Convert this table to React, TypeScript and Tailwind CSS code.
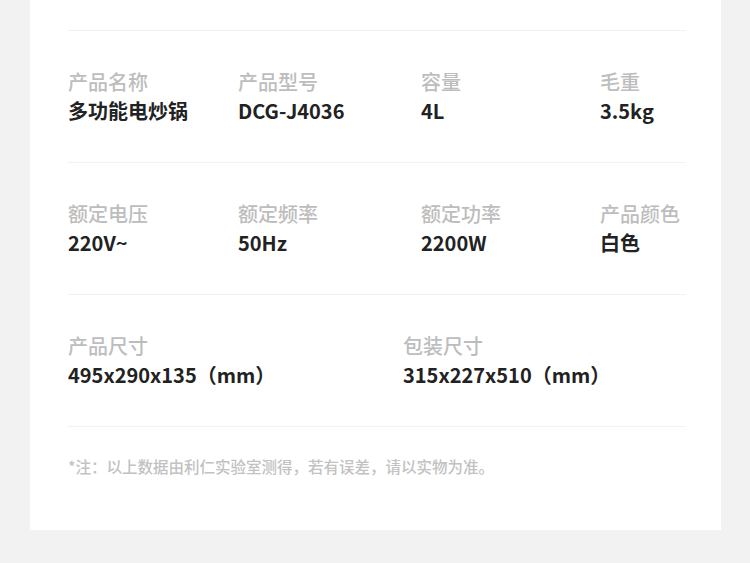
const rows = [
    [
        { label: '产品名称', value: '多功能电炒锅', w: 'w-[170px]' },
        { label: '产品型号', value: 'DCG-J4036', w: 'w-[183px]' },
        { label: '容量', value: '4L', w: 'w-[179px]' },
        { label: '毛重', value: '3.5kg', w: 'flex-1' },
    ],
    [
        { label: '额定电压', value: '220V~', w: 'w-[170px]' },
        { label: '额定频率', value: '50Hz', w: 'w-[183px]' },
        { label: '额定功率', value: '2200W', w: 'w-[179px]' },
        { label: '产品颜色', value: '白色', w: 'flex-1' },
    ],
    [
        { label: '产品尺寸', value: '495x290x135（mm）', w: 'w-[335px]' },
        { label: '包装尺寸', value: '315x227x510（mm）', w: 'flex-1' },
    ],
];

export default function App() {
    return (
        <div
            className="w-[750px] h-[563px] bg-[#f2f2f2] overflow-hidden"
            style={{ fontFamily: '"Noto Sans CJK SC", "Noto Sans", sans-serif' }}
        >
            <div className="ml-[30px] w-[691px] h-[530px] bg-white pt-[30px] pl-[38px] pr-[35px]">
                <div className="h-px bg-[#f2f2f2]" />
                {rows.map((row, i) => (
                    <div key={i}>
                        <div className="flex pt-[36px] pb-[36px]">
                            {row.map((item) => (
                                <div key={item.label} className={item.w}>
                                    <div className="text-[20px] leading-[29px] font-medium text-[#bdbdbd]">{item.label}</div>
                                    <div className="text-[20px] leading-[30px] font-bold text-[#222]">{item.value}</div>
                                </div>
                            ))}
                        </div>
                        <div className="h-px bg-[#f2f2f2]" />
                    </div>
                ))}
                {/* footnote */}
                <div className="pt-[28px] text-[15.5px] leading-[22px] font-medium text-[#c2c2c2]">
                    *注：以上数据由利仁实验室测得，若有误差，请以实物为准。
                </div>
            </div>
        </div>
    );
}
